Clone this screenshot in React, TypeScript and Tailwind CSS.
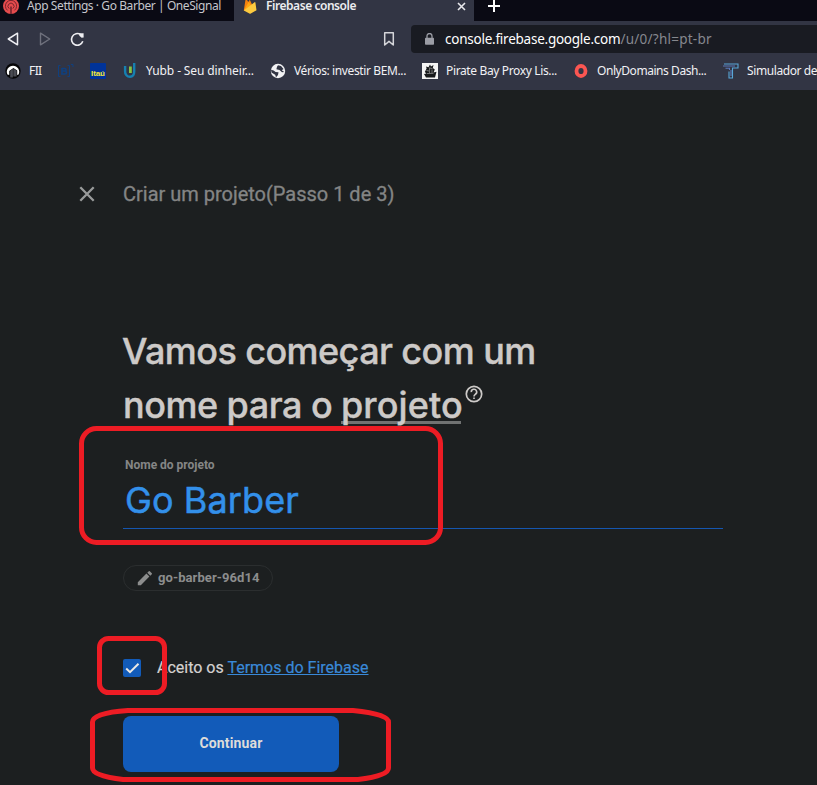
import type { ReactNode } from "react";

const UI = "font-['Noto_Sans',sans-serif]";

function Flame() {
  return (
    <svg width="14" height="16" viewBox="0 0 14 16" className="block">
      <path d="M0.8 12.4 2.6 1Q3 .2 3.6 1L5.2 4 6.4 2.2Q6.8 1.7 7.2 2.4L11.5 12Z" fill="#f5820d" />
      <path d="M0.8 12.4 5.8 3.8 9 9Z" fill="#ffa712" />
      <path d="M0.8 12.4 11.6 4.2Q12.2 3.8 12.4 4.6L13.5 12.2 7.8 15.5Q7.1 15.9 6.4 15.5Z" fill="#fcca3f" />
    </svg>
  );
}

function TabStrip() {
  return (
    <div className={`flex h-[21px] shrink-0 bg-[#0a0a14] text-[12px] leading-[12px] ${UI}`}>
      <div className="flex w-[234px] shrink-0 pl-[3px]">
        <svg width="16" height="16" viewBox="0 0 16 16" className="-mt-[2px] shrink-0">
          <circle cx="8" cy="8" r="8" fill="#e54b4d" />
          <path d="M4.6 12.4A5.6 5.6 0 1 1 11.4 12.4M6.2 10.6A3 3 0 1 1 9.8 10.6" fill="none" stroke="#6a2029" strokeWidth=".9" />
          <path d="M7.4 8.5H8.6V16H7.4Z" fill="#4a1824" />
        </svg>
        <span className="ml-[8px] whitespace-nowrap tracking-[-0.42px] text-[#c5c6cc]">App Settings · Go Barber | OneSignal</span>
      </div>
      <div className="flex w-[240px] shrink-0 bg-[#323544] pl-[9px]">
        <div className="-mt-[2px]"><Flame /></div>
        <span className="ml-[9px] w-[188px] whitespace-nowrap font-semibold tracking-[-0.45px] text-[#ececf0]">Firebase console</span>
        <svg width="9" height="9" viewBox="0 0 9 9" className="mt-[2px] ml-[3px]">
          <path d="M1 1 8 8M8 1 1 8" stroke="#e8e8ec" strokeWidth="1.6" />
        </svg>
      </div>
      <svg width="12" height="12" viewBox="0 0 12 12" className="ml-[14px]">
        <path d="M6 0V12M0 6H12" stroke="#fff" strokeWidth="2" />
      </svg>
    </div>
  );
}

function AddressBar() {
  return (
    <div className="flex h-[36px] shrink-0 items-center pl-[7px]">
      <svg width="12" height="16" viewBox="0 0 12 16"><path d="M10.5 2.2V13.8L1.3 8Z" fill="none" stroke="#eeeef2" strokeWidth="1.5" strokeLinejoin="round" /></svg>
      <svg width="12" height="16" viewBox="0 0 12 16" className="ml-[20px]"><path d="M1.5 2.2V13.8L10.7 8Z" fill="none" stroke="#6f717d" strokeWidth="1.4" strokeLinejoin="round" /></svg>
      <svg width="15" height="15" viewBox="0 0 15 15" className="ml-[19px]">
        <path d="M10.6 2.6A5.8 5.8 0 1 0 12.8 9.3" fill="none" stroke="#eeeef2" strokeWidth="1.6" />
        <path d="M9.3 1.2H13.6V5.4L11.6 5.8 9.3 3.8Z" fill="#eeeef2" />
      </svg>
      <svg width="12" height="16" viewBox="0 0 12 16" className="ml-[298px]"><path d="M1.7 1.7H10.3V14L6 10.4 1.7 14Z" fill="none" stroke="#d5d6da" strokeWidth="1.5" strokeLinejoin="round" /></svg>
      <div className={`ml-[16px] flex h-[28px] flex-1 items-center rounded-l-[4px] bg-[#191b22] pl-[14px] text-[13.5px] ${UI}`}>
        <svg width="9" height="12" viewBox="0 0 9 12"><path d="M2 5V3A2.5 2.5 0 0 1 7 3V5" fill="none" stroke="#9b9da5" strokeWidth="1.3" /><rect y="4.7" width="9" height="7" rx=".8" fill="#9b9da5" /></svg>
        <span className="ml-[11px] whitespace-nowrap tracking-[-0.24px] text-white">console.firebase.google.com<span className="tracking-[0.25px] text-[#86888f]">/u/0/?hl=pt-br</span></span>
      </div>
    </div>
  );
}

function Bookmark({ icon, label, className }: { icon: ReactNode; label?: string; className: string }) {
  return (
    <div className={`flex shrink-0 items-center ${className}`}>
      <div className="flex h-[16px] w-[16px] shrink-0 items-center justify-center">{icon}</div>
      {label && <span className="ml-[8px] whitespace-nowrap">{label}</span>}
    </div>
  );
}

function Bookmarks() {
  return (
    <div className={`flex h-[33px] shrink-0 items-start overflow-hidden pt-[6px] pl-[5px] text-[12px] leading-[16px] text-[#f1f1f4] ${UI}`}>
      <Bookmark className="w-[52px] tracking-[-0.6px]" label="FII" icon={
        <svg width="16" height="16" viewBox="0 0 16 16"><circle cx="8" cy="8" r="7.7" fill="#050507" /><path d="M2.4 11.5A6.2 6.2 0 1 1 13.6 11.5L12.2 12V7.5L8.4 5 4.2 8V12Z" fill="#fff" /><path d="M5.2 7.9 7.9 5.8V14.4H5.2ZM8.3 5.4 11.6 7.8V13.4H8.3Z" fill="#4a4c54" /></svg>} />
      <Bookmark className="w-[33px]" icon={
        <svg width="18" height="16" viewBox="0 0 18 16" className="shrink-0" fill="none" stroke="#10407f">
          <path d="M4.500 2.500H2.500V13.500H4.500M11.500 2.500H13.500V13.500H11.500M15 1.500H17V4" strokeWidth="1" />
          <path d="M6 5.500H8.800Q10 5.500 10 6.800T8.800 8H6M8.800 8Q10.500 8 10.500 9.500T8.800 11H6V5" strokeWidth="1.700" />
        </svg>} />
      <Bookmark className="w-[32px]" icon={
        <div className="flex h-[16px] w-[16px] items-end justify-center rounded-[1px] bg-[#003399] font-['Liberation_Sans',sans-serif] text-[8px] leading-[11px] font-bold tracking-[-0.1px] text-[#f3e838]">Itaú</div>} />
      <Bookmark className="w-[148px] tracking-[-0.12px]" label="Yubb - Seu dinheir..." icon={
        <svg width="16" height="16" viewBox="0 0 16 16"><path d="M3.1 3V8.5A5 5 0 0 0 8 13.8Q12.2 13.8 12.2 8.5V0" fill="none" stroke="#1680b0" strokeWidth="2.4" /><path d="M7 3.5H9.8V10H7Z" fill="#86c440" /></svg>} />
      <Bookmark className="w-[152px] tracking-[-0.38px]" label="Vérios: investir BEM..." icon={
        <svg width="16" height="16" viewBox="0 0 16 16"><circle cx="8" cy="8" r="7.2" fill="#f2f2f4" /><path d="M1 6.7Q4 7 5.6 9L8.5 9.3 8 12 6 14.2 5.2 11.8 1.5 9.5ZM8 2.2 11 3.1 13.5 6 11.8 7.3 14.2 9 12 9.2 9.5 7 6.4 6.2 7 3.7Z" fill="#323544" /></svg>} />
      <Bookmark className="w-[151px] tracking-[-0.36px]" label="Pirate Bay Proxy Lis..." icon={
        <svg width="16" height="16" viewBox="0 0 16 16">
          <path d="M0 0H16V16H0Z" fill="#f4f4f4" />
          <path d="M2 11 4.500 10.600 2.800 9 4.600 5.500 4 3.500 6.500 4.200 8 1.500 9 3.500 11.500 2 10.800 5 12.800 6.500 11.500 9.500 14.500 8.800 13 14.500H4Z" fill="#17191b" />
          <path d="M4.500 7.500 7 8M7.800 5 10.500 5.600M5 10.500 11.500 10.400M7.600 4.500V10M10 6.500V10" stroke="#bbb" strokeWidth=".6" />
        </svg>} />
      <Bookmark className="w-[150px] tracking-[-0.44px]" label="OnlyDomains Dash..." icon={
        <svg width="16" height="16" viewBox="0 0 16 16"><ellipse cx="8" cy="8" rx="4.5" ry="5" fill="none" stroke="#fb5652" strokeWidth="3.8" /></svg>} />
      <Bookmark className="w-[92px] tracking-[-0.4px]" label="Simulador de" icon={
        <svg width="16" height="16" viewBox="0 0 16 16" fill="none" strokeWidth="1.1">
          <path d="M1 1H15V5H9.500V15H6V8.500" stroke="#58a6d8" />
          <path d="M0 3H12M2.500 5.200H6.500V7M8 7V13" stroke="#5b78b8" />
        </svg>} />
    </div>
  );
}

export default function App() {
  return (
    <div className="relative flex h-[785px] w-[817px] flex-col overflow-hidden bg-[#1c1f20] font-[Roboto,sans-serif]">
      <div className="flex h-[90px] shrink-0 flex-col bg-[#323544]">
        <TabStrip />
        <AddressBar />
        <Bookmarks />
      </div>
      <main className="flex flex-1 flex-col pl-[123px]">
        <div className="mt-[90px] -ml-[44px] flex h-[28px] items-center text-[#848585]">
          <svg width="16" height="16" viewBox="0 0 16 16"><path d="M1.3 1.3 14.7 14.7M14.7 1.3 1.3 14.7" stroke="#999b9b" strokeWidth="2.3" /></svg>
          <span className="ml-[28px] text-[20px] leading-[28px] tracking-[-0.01px] whitespace-nowrap [-webkit-text-stroke:0.3px]">Criar um projeto(Passo 1 de 3)</span>
        </div>
        <h1 className="mt-[116px] h-[108px] font-[Inter,sans-serif] text-[36px] leading-[54px] font-medium whitespace-nowrap text-[#cdcac8] [-webkit-text-stroke:0.4px]">
          <span className="-ml-px block tracking-[-0.58px]">Vamos começar com um</span>
          <span className="flex tracking-[-0.5px]">
            <span className="w-[218px]">nome para o</span>
            <span className="h-[46px] w-[120px] border-b-[3px] border-[#707272] tracking-[0.1px]">projeto</span>
            <svg width="18" height="18" viewBox="0 0 18 18" className="mt-[7px] ml-[4px]">
              <circle cx="9" cy="9" r="7.7" fill="none" stroke="#cdcac8" strokeWidth="1.7" />
              <path d="M6.3 7.2A2.7 2.7 0 1 1 10.3 9.3Q9 10.2 9 11.5" fill="none" stroke="#cdcac8" strokeWidth="1.6" />
              <path d="M8.2 12.5H9.8V14.1H8.2Z" fill="#cdcac8" />
            </svg>
          </span>
        </h1>
        <div className="flex h-[97px] w-[600px] flex-col border-b border-[#1556b0] pt-[25px] pl-[2px]">
          <label className="text-[12px] leading-[16px] font-bold text-[#858686]">Nome do projeto</label>
          <div className="mt-[5px] font-[Inter,sans-serif] text-[36px] leading-[44px] tracking-[0.1px] text-[#3390ea] [-webkit-text-stroke:0.5px]">Go Barber</div>
        </div>
        <div className="mt-[36px] flex h-[26px] w-[150px] items-center rounded-full border border-[#2b2e2f] pl-[13px] text-[13px] font-bold text-[#8c8d8d]">
          <svg width="16" height="16" viewBox="0 0 16 16"><path d="M.8 12.2V15.2H3.8L12.4 6.6 9.4 3.6ZM14.8 4.2Q15.3 3.7 14.8 3.2L12.8 1.2Q12.3 .7 11.8 1.2L10.3 2.7 13.3 5.7Z" fill="#8c8d8d" /></svg>
          <span className="ml-[5px] tracking-[0.08px] whitespace-nowrap">go-barber-96d14</span>
        </div>
        <div className="mt-[66px] flex h-[20px] items-center text-[16px] whitespace-nowrap text-[#d5d2d0]">
          <div className="mt-[1px] h-[18px] w-[18px] rounded-[2px] bg-[#125bb9]">
            <svg width="18" height="18" viewBox="0 0 18 18"><path d="M3.2 9.6 7 13.2 15.5 4.8" fill="none" stroke="#ebe9e6" strokeWidth="2" /></svg>
          </div>
          <span className="mt-[2px] ml-[16px] [-webkit-text-stroke:0.2px]">Aceito os <span className="text-[#3989d8] underline">Termos do Firebase</span></span>
        </div>
        <button className="mt-[39px] h-[56px] w-[216px] rounded-[8px] bg-[#125bb9] pb-[2px] text-[14px] font-bold tracking-[0.15px] text-[#dedcd9]">Continuar</button>
      </main>
      <svg width="817" height="785" viewBox="0 0 817 785" className="pointer-events-none absolute inset-0" fill="none" stroke="#ed1c24" strokeWidth="5">
        <rect x="81.5" y="428.5" width="359" height="114" rx="15" />
        <rect x="99.5" y="638.5" width="65" height="54" rx="9" />
        <path d="M128 710.5H353Q388.5 714 388.5 722V768Q388.5 776 358 779.5H123Q92.5 776 92.5 768V722Q92.5 713 128 710.5Z" />
      </svg>
    </div>
  );
}
